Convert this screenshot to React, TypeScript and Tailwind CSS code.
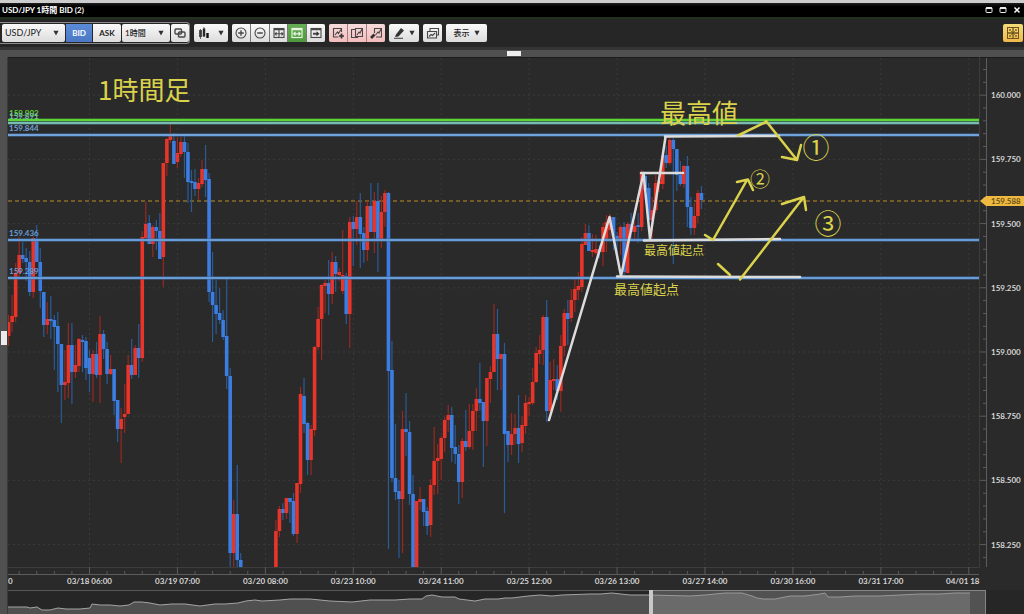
import React from "react";

type Candle = [number, "R" | "B", number, number, number, number];

// slot, colour, body top, body bottom, wick top, wick bottom
const candles: Candle[] = [
  [0, "R", 322, 336, 315, 346], [1, "R", 316, 322, 295, 332], [2, "R", 273, 317, 263, 322],
  [3, "R", 255, 273, 237, 277], [4, "B", 255, 259, 242, 263], [5, "B", 258, 262, 248, 281],
  [6, "B", 262, 292, 251, 296], [7, "R", 238, 292, 237, 298], [8, "B", 240, 262, 225, 262],
  [9, "B", 262, 291, 248, 308], [10, "B", 292, 325, 292, 337], [11, "R", 319, 325, 302, 334],
  [12, "B", 319, 321, 296, 339], [13, "B", 320, 327, 315, 370], [14, "B", 326, 344, 312, 392],
  [15, "B", 344, 385, 344, 423], [16, "R", 382, 385, 350, 400], [17, "R", 345, 383, 323, 398],
  [18, "B", 345, 372, 323, 404], [19, "R", 365, 372, 345, 378], [20, "R", 339, 366, 338, 372],
  [21, "B", 340, 342, 335, 372], [22, "B", 341, 368, 337, 380], [23, "B", 358, 374, 350, 392],
  [24, "R", 354, 374, 350, 402], [25, "B", 354, 375, 342, 378], [26, "R", 334, 375, 316, 403],
  [27, "B", 334, 349, 330, 359], [28, "B", 349, 374, 342, 384], [29, "R", 369, 374, 355, 375],
  [30, "B", 369, 401, 369, 415], [31, "B", 400, 429, 400, 442], [32, "R", 419, 429, 408, 463],
  [33, "R", 414, 417, 384, 433], [34, "R", 365, 414, 355, 414], [35, "B", 365, 375, 339, 379],
  [36, "R", 348, 375, 345, 375], [37, "B", 348, 358, 324, 378], [38, "R", 237, 358, 231, 362],
  [39, "R", 224, 238, 202, 238], [40, "B", 223, 244, 215, 244], [41, "R", 227, 244, 225, 257],
  [42, "B", 227, 231, 220, 250], [43, "B", 231, 259, 213, 259], [44, "R", 163, 257, 163, 287],
  [45, "R", 139, 163, 138, 176], [46, "R", 136, 140, 122, 143], [47, "B", 141, 164, 133, 164],
  [48, "R", 153, 162, 137, 168], [49, "R", 142, 154, 137, 157], [50, "B", 142, 152, 135, 178],
  [51, "B", 152, 182, 143, 203], [52, "B", 181, 183, 170, 212], [53, "B", 182, 189, 169, 196],
  [54, "R", 183, 189, 178, 200], [55, "R", 169, 184, 160, 187], [56, "B", 169, 180, 145, 197],
  [57, "B", 179, 292, 173, 302], [58, "B", 292, 305, 252, 342], [59, "B", 305, 314, 280, 334],
  [60, "B", 313, 320, 288, 324], [61, "B", 320, 337, 310, 340], [62, "B", 336, 376, 278, 389],
  [63, "B", 376, 553, 368, 567], [64, "R", 514, 553, 500, 567], [65, "B", 514, 560, 465, 567],
  [66, "B", 560, 567, 553, 567], [76, "R", 531, 567, 520, 567], [77, "R", 509, 531, 506, 537],
  [78, "B", 509, 513, 503, 520], [79, "R", 498, 513, 498, 519], [80, "B", 498, 502, 498, 523],
  [81, "B", 501, 534, 493, 536], [82, "R", 483, 534, 483, 543], [83, "R", 394, 484, 387, 493],
  [84, "B", 396, 424, 378, 433], [85, "B", 423, 460, 422, 475], [86, "R", 429, 460, 425, 475],
  [87, "R", 347, 430, 346, 436], [88, "R", 319, 347, 307, 350], [89, "R", 285, 319, 284, 360],
  [90, "R", 283, 286, 280, 313], [91, "B", 283, 294, 260, 315], [92, "R", 262, 294, 252, 304],
  [93, "B", 262, 274, 256, 292], [94, "R", 272, 275, 268, 281], [95, "R", 275, 291, 230, 294],
  [96, "B", 276, 314, 273, 324], [97, "R", 222, 314, 217, 348], [98, "B", 222, 229, 216, 266],
  [99, "R", 217, 229, 201, 245], [100, "B", 217, 234, 193, 268], [101, "B", 233, 250, 227, 263],
  [102, "R", 206, 250, 201, 261], [103, "B", 206, 232, 183, 232], [104, "R", 201, 232, 192, 253],
  [105, "B", 201, 239, 183, 272], [106, "R", 212, 239, 196, 248], [107, "R", 193, 212, 190, 227],
  [108, "B", 193, 371, 192, 549], [109, "B", 370, 478, 341, 482], [110, "B", 478, 492, 424, 500],
  [111, "B", 491, 499, 480, 558], [112, "R", 429, 499, 411, 553], [113, "B", 429, 432, 393, 456],
  [114, "B", 432, 494, 421, 505], [115, "B", 494, 567, 475, 567], [116, "R", 501, 567, 501, 567],
  [117, "R", 499, 502, 487, 510], [118, "B", 499, 512, 499, 526], [119, "B", 511, 526, 507, 535],
  [120, "R", 485, 525, 479, 537], [121, "R", 461, 485, 427, 495], [122, "R", 458, 461, 444, 494],
  [123, "R", 438, 459, 436, 480], [124, "R", 420, 438, 417, 452], [125, "R", 415, 420, 405, 432],
  [126, "B", 415, 448, 407, 462], [127, "B", 447, 454, 425, 464], [128, "B", 454, 482, 445, 504],
  [129, "R", 441, 482, 438, 498], [130, "B", 441, 447, 410, 451], [131, "R", 431, 447, 404, 449],
  [132, "R", 411, 431, 404, 450], [133, "R", 399, 411, 388, 431], [134, "B", 399, 403, 363, 411],
  [135, "B", 402, 421, 402, 467], [136, "R", 378, 421, 378, 446], [137, "R", 372, 379, 366, 403],
  [138, "R", 334, 372, 304, 372], [139, "B", 334, 359, 309, 390], [140, "R", 354, 359, 354, 390],
  [141, "B", 354, 434, 343, 513], [142, "B", 431, 445, 431, 462], [143, "R", 434, 445, 413, 455],
  [144, "R", 428, 434, 414, 445], [145, "B", 428, 444, 395, 463], [146, "R", 425, 443, 416, 452],
  [147, "R", 403, 426, 395, 434], [148, "R", 402, 404, 397, 416], [149, "R", 382, 403, 368, 405],
  [150, "R", 353, 382, 347, 383], [151, "R", 350, 354, 335, 364], [152, "R", 317, 350, 315, 365],
  [153, "B", 317, 411, 300, 422], [154, "R", 380, 411, 362, 418], [155, "R", 379, 381, 359, 390],
  [156, "B", 379, 391, 365, 400], [157, "R", 346, 391, 335, 412], [158, "R", 313, 346, 309, 356],
  [159, "B", 313, 319, 300, 345], [160, "R", 300, 318, 289, 322], [161, "R", 289, 300, 277, 312],
  [162, "R", 286, 290, 272, 300], [163, "R", 244, 287, 237, 292], [164, "R", 233, 245, 224, 245],
  [165, "B", 233, 251, 225, 251], [166, "R", 250, 252, 234, 257], [167, "R", 249, 253, 235, 255],
  [168, "B", 249, 252, 245, 258], [169, "R", 227, 252, 223, 266], [170, "R", 222, 239, 215, 252],
  [171, "R", 217, 230, 214, 240], [172, "B", 217, 236, 217, 250], [173, "B", 236, 240, 232, 256],
  [174, "R", 227, 240, 225, 255], [175, "B", 227, 272, 222, 275], [176, "R", 224, 273, 222, 273],
  [177, "B", 224, 232, 213, 240], [178, "R", 226, 232, 222, 240], [179, "B", 225, 227, 213, 243],
  [180, "R", 172, 227, 170, 231], [181, "B", 176, 190, 172, 200], [182, "B", 188, 220, 183, 225],
  [183, "R", 210, 220, 197, 239], [184, "R", 183, 210, 175, 213], [185, "R", 181, 184, 170, 192],
  [186, "R", 156, 184, 150, 189], [187, "B", 155, 163, 146, 168], [188, "R", 140, 163, 138, 165],
  [189, "B", 140, 149, 138, 264], [190, "B", 149, 175, 149, 191], [191, "B", 175, 184, 161, 186],
  [192, "R", 166, 184, 165, 188], [193, "B", 166, 207, 156, 227], [194, "B", 207, 228, 197, 235],
  [195, "R", 216, 228, 203, 235], [196, "R", 193, 216, 190, 223], [197, "B", 193, 200, 186, 209],
];

const prices = ["160.000", "159.750", "159.500", "159.250", "159.000", "158.750", "158.500", "158.250"];
const times = [
  "03/18 06:00", "03/19 07:00", "03/20 08:00", "03/23 10:00", "03/24 11:00", "03/25 12:00",
  "03/26 13:00", "03/27 14:00", "03/30 16:00", "03/31 17:00",
];

const levels = [
  { price: "159.902", y: 120, labelY: 116, color: "#5fd436", edge: "#3f8f28" },
  { price: "159.891", y: 123, labelY: 119, color: "#78bdb4", edge: "#4a7f7a" },
  { price: "159.844", y: 135, labelY: 131, color: "#72a2da", edge: "#426a98" },
  { price: "159.436", y: 240, labelY: 236, color: "#679cd9", edge: "#426a98" },
  { price: "159.289", y: 278, labelY: 274, color: "#679cd9", edge: "#426a98" },
];

const overview =
  "8,17 20,17 27,17 30,18 37,17 42,20 50,20 58,18 66,19 80,19 90,18 92,14 100,15 110,15 120,16 129,15 134,12 142,12 150,13 160,15 172,14 185,14 200,16 215,14 225,14 238,13 246,11 255,10 262,11 280,10 290,9 310,9 330,11 352,12 370,10 395,10 410,9 422,9 426,6 432,5 442,7 455,7 459,9 475,11 485,9 498,9 505,8 512,8 528,6 540,5 552,6 562,5 590,4 600,4 612,3 630,5 650,5 690,6 705,5 715,4 725,3 742,3 752,6 757,8 763,9 775,9 790,6 805,6 820,4 825,3 828,7 840,7 855,6 880,6 900,5 920,4 940,4 955,3 970,3";

const gridX = (i: number) => 89.5 + i * 87.93;
const gridY = (i: number) => 95.2 + i * 64.2;

const Caret: React.FC<{ className?: string }> = ({ className = "" }) => (
  <svg viewBox="0 0 6 6" className={`h-1.5 w-1.5 ${className}`} fill="#333">
    <path d="M0.4 0.8h5.2L3 5.6z" />
  </svg>
);

const Icon: React.FC<{ children: React.ReactNode; wide?: boolean }> = ({ children, wide = false }) => (
  <svg
    viewBox={wide ? "0 0 14 12" : "0 0 12 12"}
    className={`h-3 ${wide ? "w-3.5" : "w-3"}`}
    fill="none"
    stroke="#484848"
    strokeWidth="1.1"
  >
    {children}
  </svg>
);

interface ToolButtonProps {
  label: string;
  className: string;
  children: React.ReactNode;
}

const ToolButton: React.FC<ToolButtonProps> = ({ label, className, children }) => (
  <button
    type="button"
    aria-label={label}
    className={`flex h-[18px] items-center justify-center ${className}`}
  >
    {children}
  </button>
);

const light = "bg-linear-to-b from-[#fafafa] to-[#dcdcdc]";
const pink = "bg-linear-to-b from-[#f6dada] to-[#f4bcbc]";

const TitleBar = () => (
  <header className="flex h-[19px] items-center justify-between border-t-3 border-b-2 border-t-[#cdcdcd] border-b-[#22301f] bg-linear-to-b from-[#202020] to-black to-40% px-0.5">
    <h1 className="text-[8px] leading-none font-bold text-white">USD/JPY 1時間 BID (2)</h1>
    <div className="flex items-center gap-1.5 pr-px">
      {["最小化", "最大化"].map((label) => (
        <button key={label} type="button" aria-label={label}>
          <svg viewBox="0 0 8 8" className="h-2 w-2" fill="none" stroke="#eee">
            <rect x="1" y="1.5" width="6" height="5" rx="0.8" />
            <path d="M1 2.2h6" strokeWidth="1.6" />
          </svg>
        </button>
      ))}
      <button type="button" aria-label="閉じる">
        <svg viewBox="0 0 8 8" className="h-2 w-2" stroke="#fff" strokeWidth="1.5">
          <path d="M1.5 1.5l5 5M6.5 1.5l-5 5" />
        </svg>
      </button>
    </div>
  </header>
);

const Toolbar = () => (
  <div className="flex h-7 items-center justify-between bg-[#262626] pr-px">
    <div className="flex items-center gap-1">
      <div className="flex h-[22px] items-center gap-px rounded-r-sm border border-l-0 border-[#8a8a8a] pl-0.5">
        <div className="relative">
          <select
            aria-label="通貨ペア"
            className={`block h-[18px] w-[63px] appearance-none rounded-xs pl-[3px] text-[9px] text-[#222] ${light}`}
          >
            <option>USD/JPY</option>
          </select>
          <Caret className="pointer-events-none absolute top-1.5 right-1.5" />
        </div>
        <button type="button" className="h-[18px] w-[26px] bg-linear-to-b from-[#5b8ad6] to-[#4a78c4] text-[8px] font-bold text-white">
          BID
        </button>
        <button type="button" className={`h-[18px] w-7 rounded-r-xs text-[8px] font-bold text-[#222] ${light}`}>
          ASK
        </button>
        <div className="relative">
          <select
            aria-label="足種"
            className={`block h-[18px] w-[48px] appearance-none rounded-xs pl-[3px] text-[8px] font-medium text-[#222] ${light}`}
          >
            <option>1時間</option>
          </select>
          <Caret className="pointer-events-none absolute top-1.5 right-1.5" />
        </div>
        <ToolButton label="連動" className={`w-[18px] rounded-xs ${light}`}>
          <Icon>
            <rect x="1" y="2" width="6.5" height="5" rx="1" strokeWidth="1.4" />
            <rect x="4.5" y="5" width="6.5" height="5" rx="1" strokeWidth="1.4" />
          </Icon>
        </ToolButton>
      </div>
      <ToolButton label="チャート種別" className={`w-[34px] gap-2 rounded-xs ${light}`}>
        <Icon>
          <path d="M2.5 3v7M6 1.500v8M9.500 6v5" strokeWidth="2.400" stroke="#111" />
          <path d="M2.500 2v10M6 0v10" strokeWidth="0.8" />
        </Icon>
        <Caret />
      </ToolButton>
      <div className="flex gap-px overflow-hidden rounded-xs bg-[#777]">
        <ToolButton label="拡大" className={`w-[18px] ${light}`}>
          <Icon>
            <circle cx="6" cy="6" r="5" />
            <path d="M3.2 6h5.6M6 3.200v5.600" strokeWidth="1.4" />
          </Icon>
        </ToolButton>
        <ToolButton label="縮小" className={`w-[18px] ${light}`}>
          <Icon>
            <circle cx="6" cy="6" r="5" />
            <path d="M3.2 6h5.600" strokeWidth="1.4" />
          </Icon>
        </ToolButton>
        <ToolButton label="全体表示" className={`w-[17px] ${light}`}>
          <Icon>
            <rect x="1" y="1.500" width="10" height="9" />
            <path d="M1 2.200h10" strokeWidth="2" />
            <path d="M6 3v7M2 6.800h8M3.500 5.300L2 6.800l1.500 1.500M8.500 5.300L10 6.800 8.500 8.300" />
          </Icon>
        </ToolButton>
        <ToolButton label="幅に合わせる" className="w-[18px] bg-linear-to-b from-[#67ad55] to-[#4e983d]">
          <svg viewBox="0 0 12 12" className="h-3 w-3" fill="none" stroke="#e6f5e0" strokeWidth="1.200">
            <rect x="1" y="1.500" width="10" height="9" />
            <path d="M1 2.200h10" strokeWidth="2" />
            <path d="M3 6.800h6M4.500 5L2.700 6.800l1.800 1.800M7.500 5l1.800 1.800-1.800 1.800" />
          </svg>
        </ToolButton>
        <ToolButton label="最新へ移動" className={`w-[18px] ${light}`}>
          <Icon>
            <rect x="1" y="1.500" width="10" height="9" />
            <path d="M1 2.200h10" strokeWidth="2" />
            <path d="M3 6.800h4" strokeWidth="2" />
            <path d="M6.500 4.300v5L9.500 6.800z" fill="#333" stroke="none" />
          </Icon>
        </ToolButton>
      </div>
      <div className="flex gap-px overflow-hidden rounded-xs bg-[#a08080]">
        <ToolButton label="描画を追加" className={`w-[18px] ${pink}`}>
          <Icon>
            <path d="M9.500 5V1.500h-8v8.500h5M3 8l2.500-3 1 1.500 2.500-4" />
            <path d="M9.500 6.500v5M7 9h5" strokeWidth="1.700" stroke="#333" />
          </Icon>
        </ToolButton>
        <ToolButton label="描画をコピー" className={`w-[18px] ${pink}`}>
          <Icon>
            <path d="M4.500 2.500h-4v8h6v-1M4.500 1.500h7v8h-7zM6 8l2-3 1 1 2-4" />
          </Icon>
        </ToolButton>
        <ToolButton label="描画を消去" className={`w-[18px] ${pink}`}>
          <Icon>
            <path d="M4.500 6V1.500h7V10H6M5.500 8L8 5l1 1 2-4" />
            <path d="M1 11l3.500-3.500" strokeWidth="2.800" stroke="#333" />
          </Icon>
        </ToolButton>
      </div>
      <ToolButton label="描画ツール" className={`w-[30px] gap-1 rounded-xs ${light}`}>
        <Icon>
          <path d="M3 7.500l5-6.500 3 2.500-5.500 6L2 10z" fill="#333" stroke="none" />
          <path d="M1 11.300h9" />
        </Icon>
        <Caret />
      </ToolButton>
      <ToolButton label="チャート複製" className={`w-[19px] rounded-xs ${light}`}>
        <Icon wide>
          <path d="M4 4V1.500h8.500V8H11M1.500 4.500h9v6.500h-9zM3 9.500l2-2 1.500 1L9 6" />
        </Icon>
      </ToolButton>
      <button type="button" className={`flex h-[18px] w-[41px] items-center justify-center gap-1 rounded-xs text-[8px] font-medium text-[#222] ${light}`}>
        表示
        <Caret />
      </button>
    </div>
    <ToolButton label="レイアウト" className="w-5 rounded-xs bg-linear-to-b from-[#f5dc78] to-[#efb84e]">
      <svg viewBox="0 0 12 12" className="h-3 w-3" fill="none" stroke="#6b5420">
        <rect x="0.500" y="0.500" width="11" height="11" />
        <path d="M6 1v10M1 6h10" strokeWidth="1.300" />
        <path d="M2.500 4V2.500H4M8 2.500h1.500V4M2.500 8v1.500H4M8 9.500h1.500V8M3 3l6 6M9 3L3 9" strokeWidth="0.700" />
      </svg>
    </ToolButton>
  </div>
);

const Grid = () => (
  <g>
    <g stroke="#3a3a3a" strokeDasharray="2 3">
      {Array.from({ length: 11 }, (_, i) => (
        <line key={i} x1={gridX(i)} x2={gridX(i)} y1="58" y2="567" />
      ))}
      {prices.map((price, i) => (
        <line key={price} x1="8" x2="979" y1={gridY(i)} y2={gridY(i)} />
      ))}
    </g>
    <path d="M8 567.500H979.500V57" fill="none" stroke="#3c3c3c" />
    <path d="M8 574.500H979M986.500 58V567" fill="none" stroke="#5c5c5c" />
    <g stroke="#5c5c5c">
      {Array.from({ length: 55 }, (_, i) => (
        <line key={i} x1={gridX(i / 5) - 70.34} x2={gridX(i / 5) - 70.34} y1={i % 5 === 4 ? 567 : 571} y2="574" />
      ))}
      {Array.from({ length: 39 }, (_, i) => (
        <line key={i} x1={i % 5 === 2 ? 980 : 983} x2="986" y1={69.5 + i * 12.84} y2={69.5 + i * 12.84} />
      ))}
    </g>
    <g fill="#d4d4d4" fontSize="8" fontWeight="700">
      {prices.map((price, i) => (
        <text key={price} x="991" y={gridY(i) + 3}>
          {price}
        </text>
      ))}
      <text x="8" y="584">0</text>
      {times.map((time, i) => (
        <text key={time} x={gridX(i)} y="584" textAnchor="middle">
          {time}
        </text>
      ))}
      <text x="946" y="584">04/01 18</text>
    </g>
  </g>
);

const Candles = () => (
  <g>
    {candles.map(([slot, color, top, bottom, high, low]) => {
      const x = 8.6 + slot * 3.517;
      return (
        <g key={slot}>
          <rect x={x - 0.6} y={high} width="1.2" height={low - high} fill={color === "R" ? "#97291f" : "#295b97"} />
          <rect x={x - 1.8} y={top} width="3.6" height={bottom - top} fill={color === "R" ? "#e8352a" : "#3b7de0"} />
        </g>
      );
    })}
  </g>
);

const Annotations = () => (
  <g>
    <g fill="none" stroke="#dcdcdc" strokeWidth="2.5" strokeLinecap="round" strokeLinejoin="round">
      <path d="M549 420L609.500 217 621 276 643.500 173 650 239 665.500 137" />
      <path d="M665 136.500L779 136M641 173H683M644 240.500L780 239M617 276.500L800 277" />
    </g>
    <g fill="none" stroke="#dbd24c" strokeWidth="2.5" strokeLinecap="round" strokeLinejoin="round">
      <path d="M738 135.500L765 122.500M766 121L797 160M782 157L797 160 801 145" />
      <path d="M705 235L713 240 747 180M737 182L748 179.500 753 190" />
      <path d="M718 264L730 275M740 279.500L803 198M782 204L804 197 806 210" />
    </g>
    <g fill="#dbd24c" className="font-['Noto_Sans_CJK_JP',sans-serif]">
      <text x="98" y="100" fontSize="26">1時間足</text>
      <text x="660" y="123" fontSize="26">最高値</text>
      <text x="644" y="255" fontSize="12">最高値起点</text>
      <text x="614" y="294" fontSize="13">最高値起点</text>
      <g textAnchor="middle">
        <text x="816" y="158" fontSize="27">①</text>
        <text x="760" y="187" fontSize="20">②</text>
        <text x="828" y="234" fontSize="27">③</text>
      </g>
    </g>
  </g>
);

const PriceChart = () => (
  <svg viewBox="8 57 1016 533" className="block h-auto w-full" role="img" aria-label="USD/JPY 1時間足チャート">
    <rect x="8" y="57" width="1016" height="533" fill="#2a2a2a" />
    <rect x="8" y="57" width="1016" height="1" fill="#1c1c1c" />
    <Grid />
    <line x1="8" x2="980" y1="201" y2="201" stroke="#8d6d2a" strokeWidth="1.5" strokeDasharray="4 3" />
    <Candles />
    {levels.map(({ price, y, labelY, color, edge }) => (
      <g key={price}>
        <line x1="8" x2="979" y1={y} y2={y} stroke={edge} strokeWidth="3" />
        <line x1="8" x2="979" y1={y} y2={y} stroke={color} strokeWidth="2" />
        <text x="9" y={labelY} fontSize="8" fontWeight="700" fill={color}>
          {price}
        </text>
      </g>
    ))}
    <path d="M980 201L986 196H1024V206H986z" fill="#efb941" />
    <text x="991" y="204" fontSize="8" fontWeight="700" fill="#6a5018">159.588</text>
    <Annotations />
  </svg>
);

const Overview = () => (
  <svg viewBox="8 0 1016 24" className="block h-auto w-full" role="img" aria-label="表示範囲">
    <rect x="8" width="1016" height="24" fill="#262626" />
    <polygon points={`8,24 ${overview} 970,24`} fill="#505050" />
    <polyline points={overview} fill="none" stroke="#a4a4a4" />
    <path d="M8 0.500H651" stroke="#585858" />
    <rect x="651" width="335" height="24" fill="#8a8a8a" fillOpacity="0.45" />
    <path d="M651 0.500H985.500V24" fill="none" stroke="#858585" />
    <rect x="649" width="4" height="24" fill="#c8c8c8" />
  </svg>
);

const App: React.FC = () => {
  return (
    <main className="min-h-screen bg-[#282828] font-[Lato,'Noto_Sans_CJK_JP',sans-serif]">
      <TitleBar />
      <Toolbar />
      {/* Horizontal splitter */}
      <div className="flex h-2.5 items-center justify-center border-t-3 border-[#343434] bg-[#505050] pl-1">
        <div className="h-[5px] w-3.5 bg-[#ececec]" />
      </div>
      <div className="flex">
        {/* Side splitter */}
        <div className="flex w-2 shrink-0 items-center justify-end border-r border-[#3a3a3a] bg-[#505050] pt-1">
          <div className="h-3.5 w-1.5 bg-[#ececec]" />
        </div>
        <div className="min-w-0 flex-1">
          <PriceChart />
          <Overview />
        </div>
      </div>
    </main>
  );
};

export default App;
